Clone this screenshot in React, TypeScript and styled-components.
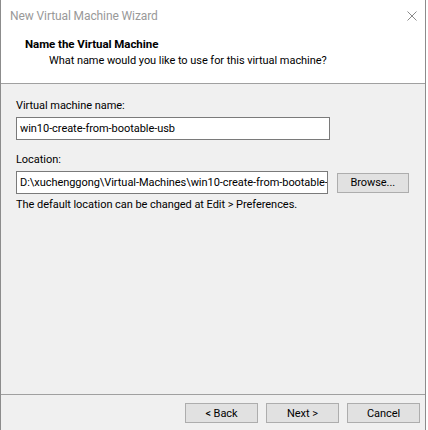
import React from 'react'
import styled, { createGlobalStyle } from 'styled-components'

const Global = createGlobalStyle`
  html, body {
    margin: 0;
    padding: 0;
    background: #ffffff;
  }
  * {
    box-sizing: border-box;
  }
`

/* Window frame */
const Window = styled.div`
  width: 426px;
  height: 430px;
  display: flex;
  flex-direction: column;
  border-left: 1px solid #8c8c8c;
  border-right: 1px solid #8c8c8c;
  background: #f0f0f0;
  font-family: Roboto, 'Noto Sans', sans-serif;
  font-size: 11px;
  letter-spacing: -0.05px;
  color: #000;
`
const TitleBar = styled.div`
  height: 31px;
  flex: none;
  display: flex;
  align-items: center;
  justify-content: space-between;
  padding: 0 8px 0 9px;
  background: #ffffff;
`
const TitleText = styled.span`
  color: #999999;
  font-size: 12px;
  letter-spacing: -0.1px;
`
const CloseBox = styled.div`
  width: 10px;
  height: 10px;
  display: flex;
  align-items: center;
  justify-content: center;
`

/* Page header */
const Header = styled.div`
  height: 53px;
  flex: none;
  background: #ffffff;
  border-bottom: 1px solid #a0a0a0;
  padding: 5px 0 0 24px;
  display: flex;
  flex-direction: column;
`
const HeaderTitle = styled.div`
  font-weight: bold;
  font-size: 11.5px;
  line-height: 17px;
`
const HeaderSub = styled.div`
  padding-left: 24px;
  line-height: 16px;
`

/* Body */
const Body = styled.div`
  flex: 1;
  padding: 14px 16px 0 15px;
  display: flex;
  flex-direction: column;
`
const Label = styled.div<{ $top?: number }>`
  margin-top: ${(p) => p.$top ?? 0}px;
  line-height: 16px;
`
const FieldRow = styled.div`
  display: flex;
  align-items: center;
  gap: 9px;
  margin-top: 3px;
`
const TextInput = styled.div`
  width: 314px;
  height: 23px;
  border: 1px solid #7a7a7a;
  background: #ffffff;
  padding: 0 3px;
  display: flex;
  align-items: center;
  white-space: nowrap;
  overflow: hidden;
`
const Note = styled.div`
  margin-top: 3px;
  line-height: 16px;
`

/* Footer */
const Footer = styled.div`
  height: 36px;
  flex: none;
  border-top: 1px solid #a0a0a0;
  display: flex;
  justify-content: flex-end;
  gap: 8px;
  padding: 8px 5px 0 0;
`
const Button = styled.div<{ $w?: number }>`
  width: ${(p) => p.$w ?? 73}px;
  height: 20px;
  background: #e1e1e1;
  border: 1px solid #adadad;
  display: flex;
  align-items: center;
  justify-content: center;
`

export default function App() {
  return (
    <>
      <Global />
      <Window>
        <TitleBar>
          <TitleText>New Virtual Machine Wizard</TitleText>
          <CloseBox>
            <svg width="10" height="10" viewBox="0 0 10 10">
              <path d="M0.5 0.5 L9.5 9.5 M9.5 0.5 L0.5 9.5" stroke="#8a8a8a" strokeWidth="1" />
            </svg>
          </CloseBox>
        </TitleBar>
        <Header>
          <HeaderTitle>Name the Virtual Machine</HeaderTitle>
          <HeaderSub>What name would you like to use for this virtual machine?</HeaderSub>
        </Header>
        <Body>
          <Label>Virtual machine name:</Label>
          <FieldRow>
            <TextInput>win10-create-from-bootable-usb</TextInput>
          </FieldRow>
          <Label $top={12}>Location:</Label>
          <FieldRow>
            <TextInput>D:\xuchenggong\Virtual-Machines\win10-create-from-bootable-usb</TextInput>
            <Button $w={73}>Browse...</Button>
          </FieldRow>
          <Note>The default location can be changed at Edit &gt; Preferences.</Note>
        </Body>
        <Footer>
          <Button>&lt; Back</Button>
          <Button>Next &gt;</Button>
          <Button>Cancel</Button>
        </Footer>
      </Window>
    </>
  )
}
